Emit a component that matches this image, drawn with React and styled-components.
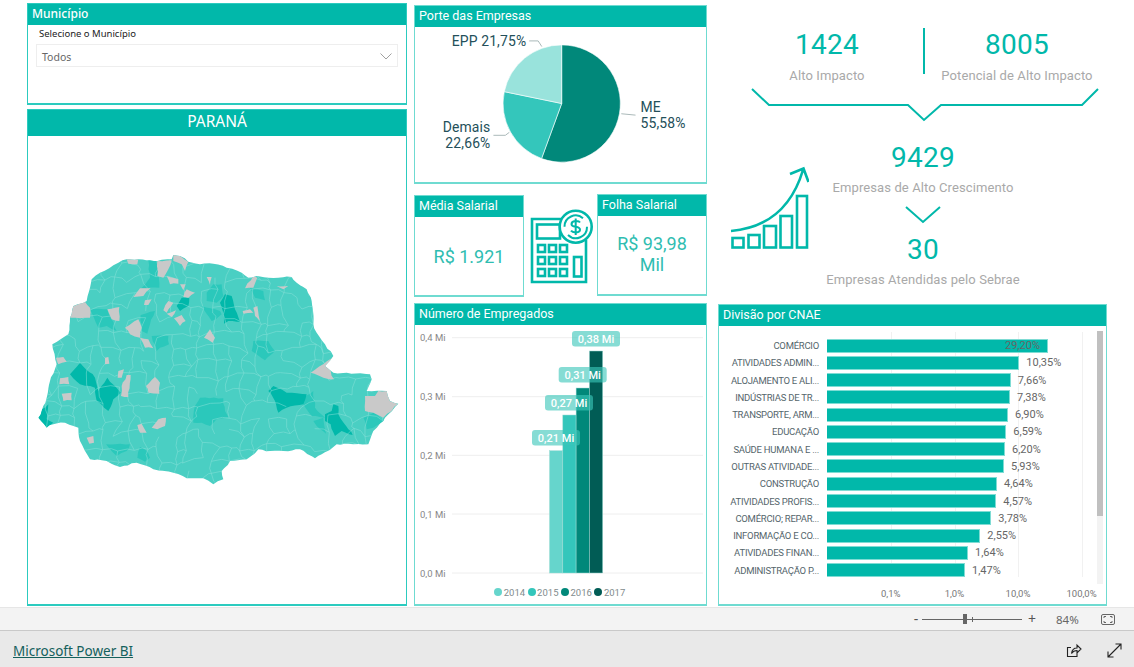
import styled, { createGlobalStyle } from 'styled-components';

const TEAL = '#01b8aa';
const DIN = '"Roboto", "Liberation Sans", sans-serif';
const SEGOE = '"Noto Sans", "Open Sans", sans-serif';

const Global = createGlobalStyle`
  html, body { margin: 0; padding: 0; background: #fff; overflow: hidden; }
  #root { height: 667px; }
`;

const Page = styled.div`
  height: 667px;
  display: flex;
  flex-direction: column;
  font-family: ${DIN};
`;

const Canvas = styled.main`
  height: 606px;
  flex: none;
  display: flex;
  padding-left: 27px;
  padding-bottom: 1px;
`;

const LeftColumn = styled.section`
  width: 380px;
  padding-top: 3px;
  display: flex;
  flex-direction: column;
  gap: 4px;
`;

const MiddleColumn = styled.section`
  width: 293px;
  margin-left: 7px;
  padding-top: 5px;
  display: flex;
  flex-direction: column;
`;

const RightColumn = styled.section`
  width: 389px;
  margin-left: 11px;
  display: flex;
  flex-direction: column;
`;

const Panel = styled.div`
  box-sizing: border-box;
  position: relative;
  display: flex;
  flex-direction: column;
  border: 1px solid ${(p) => (p.$strong ? '#2ccbbf' : '#6fdbd1')};
  border-bottom-width: 2px;
  height: ${(p) => (p.$height ? `${p.$height}px` : 'auto')};
  flex: ${(p) => (p.$height ? 'none' : '1')};
  width: ${(p) => (p.$width ? `${p.$width}px` : 'auto')};
  margin-top: ${(p) => (p.$lowered ? '1px' : '0')};
  margin-bottom: ${(p) => (p.$lowered ? '-1px' : '0')};
  background: #fff;
`;

const PanelHeader = styled.header`
  flex: none;
  height: 21px;
  line-height: 19px;
  padding-left: 4px;
  background: #01b8aa;
  color: #fff;
  font-size: 12.5px;
`;

const SlicerHeader = styled(PanelHeader)`
  font-family: ${SEGOE};
  font-size: 12px;
  font-weight: 500;
`;

const MapHeader = styled(PanelHeader)`
  height: 26px;
  line-height: 23px;
  padding: 0;
  text-align: center;
  font-family: ${SEGOE};
  font-size: 15.5px;
`;

const SlicerLabel = styled.div`
  font-family: ${SEGOE};
  font-size: 9.5px;
  line-height: 13px;
  color: #222;
  margin: 2px 0 0 11px;
`;

const Dropdown = styled.div`
  box-sizing: border-box;
  height: 23px;
  margin: 4px 8px 0;
  padding: 2px 5px 0;
  border: 1px solid #eeeeee;
  display: flex;
  align-items: center;
  justify-content: space-between;
  font-family: ${SEGOE};
  font-size: 10.5px;
  color: #666;
`;

const MapBody = styled.div`
  padding-top: 105px;
  svg { display: block; }
`;

const MetricRow = styled.div`
  display: flex;
  height: 102px;
  margin-top: 10px;
  margin-bottom: 7px;
  flex: none;
`;

const MetricValue = styled.div`
  flex: 1;
  display: flex;
  align-items: center;
  justify-content: center;
  text-align: center;
  color: #2fbdb1;
  font-size: 18px;
  line-height: 21px;
  padding-bottom: ${(p) => p.$lift}px;
`;

const CalcSlot = styled.div`
  width: 73px;
  flex: none;
  svg { display: block; }
`;

const Legend = styled.div`
  display: flex;
  justify-content: center;
  font-size: 9.5px;
  color: #7f8c8d;
  height: 14px;
  margin-top: 7px;
  padding-left: 1px;
`;

const LegendItem = styled.span`
  width: 33.4px;
  display: flex;
  align-items: center;
  gap: 1.5px;
  &::before {
    content: '';
    width: 8px;
    height: 8px;
    flex: none;
    border-radius: 50%;
    background: ${(p) => p.$color};
  }
`;

const KpiArea = styled.div`
  height: 304px;
  flex: none;
  display: flex;
  flex-direction: column;
  svg { display: block; flex: none; }
`;

const KpiTop = styled.div`
  display: grid;
  grid-template-columns: 192px 2px 184px;
  padding: 28px 0 0 13px;
  height: 57px;
`;

const Kpi = styled.div`
  text-align: center;
  color: ${TEAL};
`;

const KpiNumber = styled.div`
  font-size: 28px;
  line-height: 34px;
  font-weight: 450;
  color: ${TEAL};
  letter-spacing: 0.3px;
  margin-top: ${(p) => p.$gap || 0}px;
`;

const KpiLabel = styled.div`
  font-size: 13px;
  line-height: 17px;
  color: #a9a9a9;
  white-space: nowrap;
  letter-spacing: 0.1px;
  margin-top: ${(p) => p.$gap}px;
`;

const Divider = styled.div`
  width: 2px;
  height: 46px;
  background: ${TEAL};
`;

const KpiBottom = styled.div`
  display: flex;
  padding-left: 7px;
`;

const GrowthSlot = styled.div`
  width: 84px;
  flex: none;
  padding-top: 38px;
`;

const KpiStack = styled.div`
  width: 228px;
  display: flex;
  flex-direction: column;
  align-items: center;
  padding-top: 19px;
`;

const StackChevron = styled.svg`
  margin-top: 10.5px;
`;

const CnaeBody = styled.div`
  position: relative;
  flex: 1;
  padding: 11px 0 0 1px;
`;

const CnaeRows = styled.div`
  display: grid;
  grid-auto-rows: 17.27px;
  position: relative;
`;

const CnaeRow = styled.div`
  display: grid;
  grid-template-columns: 99px 1fr;
  column-gap: 8px;
  align-items: center;
`;

const CnaeName = styled.div`
  font-size: 9.5px;
  letter-spacing: -0.25px;
  color: #55666c;
  text-align: right;
  white-space: nowrap;
`;

const BarTrack = styled.div`
  display: flex;
  align-items: center;
  position: relative;
`;

const Bar = styled.div`
  box-sizing: border-box;
  height: 14px;
  flex: none;
  background: ${TEAL};
  border: 1px solid #7fdcd4;
  border-left: none;
`;

const BarValue = styled.span`
  font-size: 11px;
  color: #666;
  margin-left: ${(p) => (p.$inside ? '-43px' : '7px')};
  position: relative;
`;

const GridLine = styled.div`
  position: absolute;
  top: 6px;
  width: 1px;
  height: 245px;
  background: #f1f1f1;
`;

const TickRow = styled.div`
  position: absolute;
  left: 140px;
  top: 262px;
  display: flex;
  font-size: 9.5px;
  color: #777;
`;

const Tick = styled.span`
  width: 63.6px;
  text-align: center;
`;

const ScrollTrack = styled.div`
  position: absolute;
  right: 3px;
  top: 5px;
  width: 6px;
  height: 253px;
  background: #f3f3f3;
`;

const ScrollThumb = styled.div`
  width: 6px;
  height: 185px;
  background: #c0c0c0;
`;

const ZoomBar = styled.div`
  flex: none;
  box-sizing: border-box;
  height: 23px;
  background: #f3f3f3;
  border-top: 1px solid #e6e6e6;
  display: flex;
  align-items: center;
  font-family: ${SEGOE};
  color: #666;
  padding-left: 912px;
  font-size: 11.5px;
`;

const ZoomSign = styled.span`
  width: 8px;
  text-align: center;
  font-size: 14px;
  line-height: 20px;
  color: #555;
`;

const Slider = styled.div`
  position: relative;
  width: 100px;
  height: 1px;
  margin: 0 6px 0 2px;
  background: #666;
`;

const SliderThumb = styled.div`
  position: absolute;
  left: 41px;
  top: -5px;
  width: 4px;
  height: 10px;
  background: #666;
`;

const SliderTick = styled.div`
  position: absolute;
  left: 50px;
  top: -2px;
  width: 1px;
  height: 5px;
  background: #666;
`;

const ZoomPercent = styled.span`
  margin-left: 20px;
  width: 45px;
`;

const FooterBar = styled.footer`
  flex: 1;
  background: #e9e9e9;
  border-top: 1px solid #c9c9c9;
  display: flex;
  align-items: center;
  padding: 4px 12px 0 13px;
`;

const BrandLink = styled.a`
  font-family: ${SEGOE};
  font-size: 13.5px;
  color: #14605c;
  text-decoration: underline;
`;

const FooterIcons = styled.div`
  margin-left: auto;
  display: flex;
  gap: 25px;
  svg { display: block; }
`;

// contorno e municípios em coordenadas do recorte (1/3 de pixel)
const OUTLINE = '215,115 240,95 295,65 320,55 355,55 390,58 412,60 455,55 460,42 480,45 505,62 540,70 580,68 620,80 665,95 685,110 710,105 745,110 815,108 830,125 860,145 875,180 880,250 890,275 915,310 940,345 915,375 940,395 1050,400 1055,415 1040,450 1100,450 1110,480 1135,488 1095,530 1090,540 1060,570 1045,610 1000,610 950,610 905,640 885,652 840,625 790,630 750,630 715,625 680,655 630,660 605,690 610,715 580,730 550,712 500,712 460,695 400,685 350,665 300,678 260,660 210,655 180,600 175,560 135,545 100,550 80,560 55,530 65,510 80,470 90,420 110,370 97,310 145,280 150,230 160,195 200,180';

const MID_AREAS = [
  '210,205 262,205 290,270 260,255 235,260', '385,58 412,60 418,140 365,140 390,110',
  '362,222 405,210 390,250 382,278 365,270', '395,285 445,285 447,310 420,320 410,330',
  '560,155 580,130 605,130 610,165 590,185 560,180', '545,195 600,210 605,220 575,240',
  '695,330 700,300 745,300 765,330 735,358', '520,545 525,495 540,470 610,472 615,510 625,528 590,535 570,555 545,545',
  '840,480 880,450 885,500 915,530 875,525', '880,540 910,530 918,578 890,555',
  '1030,530 1060,515 1092,538 1060,560 1040,565', '258,610 330,610 320,630 290,645',
  '360,618 380,630 390,650 375,662 352,650', '690,140 730,150 735,178 705,170',
];

const DARK_AREAS = [
  '600,185 615,160 635,165 645,205 660,242 625,240 612,248 610,215', '470,195 485,170 508,172 505,195 480,210',
  '150,400 180,365 225,410 235,450 262,410 302,455 280,475 265,510 230,480 225,440 180,430',
  '745,450 760,435 800,455 860,460 850,490 800,500 775,515 765,480',
  '915,520 935,510 940,490 955,495 955,520 985,565 998,582 965,570 945,585 932,550 915,540',
  '55,530 65,505 85,490 80,535 100,545 80,560',
];

const GREY_AREAS = [
  '320,55 355,55 352,70 325,68', '412,60 455,58 445,85 430,110 412,105', '460,42 480,45 505,62 495,90 485,70 460,60',
  '440,105 475,115 475,128 450,130', '560,108 575,108 570,132', '700,105 712,110 700,140 675,142',
  '340,168 360,142 392,142 370,165', '375,178 395,175 385,192 372,192', '480,130 497,130 490,148',
  '500,145 525,155 505,170 490,168', '150,230 160,195 195,182 210,200 210,230', '262,205 298,198 298,240 275,235',
  '445,180 460,185 440,215 430,208', '440,218 468,208 455,228', '462,232 485,222 497,240 480,255',
  '315,260 355,235 365,260 360,290 330,280', '360,290 385,295 400,322 375,320', '552,290 570,265 585,290 578,305',
  '668,210 690,205 700,215 670,218', '700,200 712,195 720,240 705,225', '770,135 805,135 790,145',
  '108,350 130,348 140,362 115,370', '255,350 265,348 268,368 255,370', '295,390 312,385 305,410 293,410',
  '120,412 145,408 148,430 118,430', '125,458 155,455 155,478 130,480', '320,402 332,402 325,468 303,465 305,435',
  '378,435 405,408 420,425 418,458 385,455', '872,395 935,352 925,380 942,415 910,410',
  '1035,465 1065,465 1075,450 1100,450 1110,480 1135,488 1090,530 1060,515 1035,510',
  '395,560 415,535 438,530 435,555 412,565', '352,552 365,548 380,575 360,575', '200,590 220,585 222,605 208,608',
];

const makeRandom = (start) => {
  let seed = start;
  return () => {
    seed = (seed * 9301 + 49297) % 233280;
    return seed / 233280;
  };
};

// quebra as arestas para o contorno ficar serrilhado como no mapa
const roughen = (points, amount = 5) => {
  const rnd = makeRandom(points.length);
  const list = points.split(' ').map((p) => p.split(',').map(Number));
  const out = [];
  list.forEach(([x, y], i) => {
    const [x2, y2] = list[(i + 1) % list.length];
    const parts = Math.max(1, Math.round(Math.hypot(x2 - x, y2 - y) / 14));
    for (let k = 0; k < parts; k++) {
      const t = k / parts;
      const dx = k === 0 ? 0 : (rnd() - 0.5) * amount;
      const dy = k === 0 ? 0 : (rnd() - 0.5) * amount;
      out.push(`${(x + (x2 - x) * t + dx).toFixed(1)},${(y + (y2 - y) * t + dy).toFixed(1)}`);
    }
  });
  return out.join(' ');
};

// malha irregular para as divisas entre municípios
const borderPath = () => {
  const rnd = makeRandom(17);
  const step = 42;
  const cols = 28;
  const rows = 19;
  const pts = [];
  for (let j = 0; j < rows; j++) {
    pts[j] = [];
    for (let i = 0; i < cols; i++) {
      pts[j][i] = [40 + i * step + (rnd() - 0.5) * 30, 30 + j * step + (rnd() - 0.5) * 30];
    }
  }
  let d = '';
  for (let j = 0; j < rows; j++) {
    for (let i = 0; i < cols; i++) {
      const [x, y] = pts[j][i];
      if (i < cols - 1 && rnd() > 0.28) {
        const [x2, y2] = pts[j][i + 1];
        d += `M${x.toFixed(0)} ${y.toFixed(0)}L${((x + x2) / 2 + 4).toFixed(0)} ${((y + y2) / 2 - 5).toFixed(0)}L${x2.toFixed(0)} ${y2.toFixed(0)}`;
      }
      if (j < rows - 1 && rnd() > 0.28) {
        const [x2, y2] = pts[j + 1][i];
        d += `M${x.toFixed(0)} ${y.toFixed(0)}L${((x + x2) / 2 - 5).toFixed(0)} ${((y + y2) / 2 + 3).toFixed(0)}L${x2.toFixed(0)} ${y2.toFixed(0)}`;
      }
    }
  }
  return d;
};

const ParanaMap = () => {
  const outline = roughen(OUTLINE);
  return (
    <svg width="378" height="250" viewBox="24 0 1134 750">
      <defs>
        <clipPath id="parana">
          <polygon points={outline} />
        </clipPath>
      </defs>
      <polygon points={outline} fill="#4acfc3" />
      <g clipPath="url(#parana)">
        {MID_AREAS.map((p) => <polygon key={p} points={roughen(p, 4)} fill="#2bc8bb" />)}
        {DARK_AREAS.map((p) => <polygon key={p} points={roughen(p, 4)} fill="#01b8aa" />)}
        <path d={borderPath()} fill="none" stroke="#8be2da" strokeWidth="1.8" opacity="0.85" />
        {GREY_AREAS.map((p) => <polygon key={p} points={roughen(p, 4)} fill="#c9c9c9" />)}
      </g>
    </svg>
  );
};

const PIE = [
  { share: 55.58, color: '#01887a' },
  { share: 22.66, color: '#34c6bb' },
  { share: 21.75, color: '#99e3dc' },
];

const slicePath = (cx, cy, r, from, to) => {
  const pt = (v) => {
    const a = (v / 100) * 2 * Math.PI - Math.PI / 2;
    return `${(cx + r * Math.cos(a)).toFixed(2)} ${(cy + r * Math.sin(a)).toFixed(2)}`;
  };
  return `M${cx} ${cy}L${pt(from)}A${r} ${r} 0 ${to - from > 50 ? 1 : 0} 1 ${pt(to)}Z`;
};

const PieText = styled.text`
  font-family: ${DIN};
  font-size: 14px;
  letter-spacing: 0.15px;
  fill: #24505a;
`;

const PorteChart = () => {
  let start = 0;
  return (
    <svg width="291" height="156" viewBox="415 27 291 156">
      {PIE.map((s) => {
        const d = slicePath(561.7, 104, 59, start, start + s.share);
        start += s.share;
        return <path key={s.color} d={d} fill={s.color} stroke="#fff" strokeWidth="0.6" />;
      })}
      <g fill="none" stroke="#a9b8b8" strokeWidth="1">
        <path d="M529 41H538L541.7 46.7" />
        <path d="M493 136H505L509 133" />
        <path d="M621.7 114.3L636 115.7" />
      </g>
      <PieText x="451" y="46">EPP 21,75%</PieText>
      <PieText x="490" y="133" textAnchor="end">Demais</PieText>
      <PieText x="490" y="149" textAnchor="end">22,66%</PieText>
      <PieText x="641" y="112.5">ME</PieText>
      <PieText x="641" y="128.5">55,58%</PieText>
    </svg>
  );
};

const AxisText = styled.text`
  font-family: ${DIN};
  font-size: 9.5px;
  fill: #888;
`;

const PillText = styled.text`
  font-family: ${DIN};
  font-size: 11px;
  font-weight: 500;
  fill: #fff;
  text-anchor: middle;
`;

const YEARS = [
  { year: '2014', color: '#66d5cc', top: 450.7, x: 549.5, label: '0,21 Mi', px: 532, py: 430 },
  { year: '2015', color: '#34c6bb', top: 415, x: 562.8, label: '0,27 Mi', px: 545, py: 395 },
  { year: '2016', color: '#01887a', top: 388, x: 576.1, label: '0,31 Mi', px: 558.7, py: 367 },
  { year: '2017', color: '#015c55', top: 351, x: 589.4, label: '0,38 Mi', px: 572, py: 331 },
];

const EmpregadosChart = () => (
  <svg width="291" height="253" viewBox="415 325 291 253" style={{ display: 'block' }}>
    {[['0,4 Mi', 337.7], ['0,3 Mi', 396.7], ['0,2 Mi', 455.3], ['0,1 Mi', 514], ['0,0 Mi', 573]].map(([t, y]) => (
      <g key={t}>
        <line x1="452" x2="703" y1={y} y2={y} stroke="#eeeeee" />
        <AxisText x="420" y={y + 3.5}>{t}</AxisText>
      </g>
    ))}
    {YEARS.map((b) => (
      <rect key={b.year} x={b.x} y={b.top} width="13.3" height={573 - b.top} fill={b.color} stroke="#9fdcd6" strokeWidth="0.5" />
    ))}
    {YEARS.map((b) => (
      <g key={b.label}>
        <rect x={b.px} y={b.py} width="48" height="15.5" rx="3" fill="#3cc6ba" fillOpacity="0.62" />
        <PillText x={b.px + 24} y={b.py + 12}>{b.label}</PillText>
      </g>
    ))}
  </svg>
);

const CalculatorIcon = () => (
  <svg width="73" height="102" viewBox="524 194 73 102">
    <g fill="none" stroke={TEAL} strokeWidth="2.6">
      <path d="M566 219H532V282H586V240" />
      <rect x="537" y="224.5" width="23" height="14" />
      <circle cx="575.7" cy="226.7" r="16" fill="#fff" />
      <path d="M564.5 226.7A11.2 11.2 0 0 1 583 218.2M587 226.7A11.2 11.2 0 0 1 568 235" strokeWidth="2" />
      <path d="M580 222.5C578.5 220.2 571.5 220.5 571.5 224.2C571.5 228 580 225.5 580 229.7C580 233 573 233.3 571 230.7M575.7 218.5V235" strokeWidth="2" />
      {[245, 257, 269].map((y) => [538, 549, 560].map((x) => (
        <rect key={`${x}-${y}`} x={x} y={y} width="7" height="7" />
      )))}
      <rect x="574" y="257" width="7.5" height="19.5" />
    </g>
  </svg>
);

const GrowthIcon = () => (
  <svg width="84" height="90" viewBox="0 0 84 90">
    <g fill="none" stroke={TEAL} strokeWidth="2.6">
      <rect x="7.5" y="78" width="11" height="9.5" />
      <rect x="23.5" y="75" width="11" height="12.5" />
      <rect x="39" y="66" width="12" height="21.5" />
      <rect x="55.5" y="56" width="11.5" height="31.5" />
      <rect x="72" y="36" width="10" height="51.5" />
      <path d="M6 71C40 68 66 50 78 10M65 14L78.5 8.5L83.5 22" />
    </g>
  </svg>
);

const CNAE = [
  ['COMÉRCIO', 998, '29,20%'],
  ['ATIVIDADES ADMIN...', 912, '10,35%'],
  ['ALOJAMENTO E ALI...', 886, '7,66%'],
  ['INDÚSTRIAS DE TR...', 884, '7,38%'],
  ['TRANSPORTE, ARM...', 878, '6,90%'],
  ['EDUCAÇÃO', 873, '6,59%'],
  ['SAÚDE HUMANA E ...', 869, '6,20%'],
  ['OUTRAS ATIVIDADE...', 866, '5,93%'],
  ['CONSTRUÇÃO', 845, '4,64%'],
  ['ATIVIDADES PROFIS...', 843, '4,57%'],
  ['COMÉRCIO; REPAR...', 828, '3,78%'],
  ['INFORMAÇÃO E CO...', 795, '2,55%'],
  ['ATIVIDADES FINAN...', 758, '1,64%'],
  ['ADMINISTRAÇÃO P...', 749, '1,47%'],
];

const App = () => (
  <Page>
    <Global />
    <Canvas>
      <LeftColumn>
        <Panel $strong $height={102}>
          <SlicerHeader>Município</SlicerHeader>
          <SlicerLabel>Selecione o Município</SlicerLabel>
          <Dropdown>
            Todos
            <svg width="12" height="7" viewBox="0 0 12 7">
              <path d="M0.5 0.5L6 6L11.5 0.5" fill="none" stroke="#888" strokeWidth="0.8" />
            </svg>
          </Dropdown>
        </Panel>
        <Panel $strong>
          <MapHeader>PARANÁ</MapHeader>
          <MapBody>
            <ParanaMap />
          </MapBody>
        </Panel>
      </LeftColumn>

      <MiddleColumn>
        <Panel $height={179}>
          <PanelHeader>Porte das Empresas</PanelHeader>
          <PorteChart />
        </Panel>
        <MetricRow>
          <Panel $width={110} $lowered>
            <PanelHeader>Média Salarial</PanelHeader>
            <MetricValue $lift={0}>R$ 1.921</MetricValue>
          </Panel>
          <CalcSlot>
            <CalculatorIcon />
          </CalcSlot>
          <Panel $width={110}>
            <PanelHeader>Folha Salarial</PanelHeader>
            <MetricValue $lift={3}>R$ 93,98<br />Mil</MetricValue>
          </Panel>
        </MetricRow>
        <Panel>
          <PanelHeader>Número de Empregados</PanelHeader>
          <EmpregadosChart />
          <Legend>
            {YEARS.map((b) => <LegendItem key={b.year} $color={b.color}>{b.year}</LegendItem>)}
          </Legend>
        </Panel>
      </MiddleColumn>

      <RightColumn>
        <KpiArea>
          <KpiTop>
            <Kpi>
              <KpiNumber>1424</KpiNumber>
              <KpiLabel $gap={5}>Alto Impacto</KpiLabel>
            </Kpi>
            <Divider />
            <Kpi>
              <KpiNumber>8005</KpiNumber>
              <KpiLabel $gap={5}>Potencial de Alto Impacto</KpiLabel>
            </Kpi>
          </KpiTop>
          <svg width="389" height="37" viewBox="718 85 389 37">
            <path d="M752 89L769 105H908L924 120L941 105H1082L1098 89" fill="none" stroke={TEAL} strokeWidth="2" />
          </svg>
          <KpiBottom>
            <GrowthSlot>
              <GrowthIcon />
            </GrowthSlot>
            <KpiStack>
              <KpiNumber>9429</KpiNumber>
              <KpiLabel $gap={3.5}>Empresas de Alto Crescimento</KpiLabel>
              <StackChevron width="36" height="18" viewBox="0 0 36 18">
                <path d="M1 1L18 16L35 1" fill="none" stroke={TEAL} strokeWidth="2" />
              </StackChevron>
              <KpiNumber $gap={9}>30</KpiNumber>
              <KpiLabel $gap={3.5}>Empresas Atendidas pelo Sebrae</KpiLabel>
            </KpiStack>
          </KpiBottom>
        </KpiArea>
        <Panel>
          <PanelHeader>Divisão por CNAE</PanelHeader>
          <CnaeBody>
            {[172, 235.6, 299, 362.6].map((x) => <GridLine key={x} style={{ left: x }} />)}
            <CnaeRows>
              {CNAE.map(([name, end, value], i) => (
                <CnaeRow key={name}>
                  <CnaeName>{name}</CnaeName>
                  <BarTrack>
                    <Bar style={{ width: (end - 335) / 3 }} />
                    <BarValue $inside={i === 0}>{value}</BarValue>
                  </BarTrack>
                </CnaeRow>
              ))}
            </CnaeRows>
            <TickRow>
              <Tick>0,1%</Tick>
              <Tick>1,0%</Tick>
              <Tick>10,0%</Tick>
              <Tick>100,0%</Tick>
            </TickRow>
            <ScrollTrack>
              <ScrollThumb />
            </ScrollTrack>
          </CnaeBody>
        </Panel>
      </RightColumn>
    </Canvas>

    <ZoomBar>
      <ZoomSign>-</ZoomSign>
      <Slider>
        <SliderThumb />
        <SliderTick />
      </Slider>
      <ZoomSign>+</ZoomSign>
      <ZoomPercent>84%</ZoomPercent>
      <svg width="14" height="11" viewBox="0 0 14 11">
        <rect x="0.5" y="0.5" width="13" height="10" rx="1.5" fill="none" stroke="#666" />
        <path d="M3 4V2.5H5M9 2.5H11V4M3 7V8.5H5M9 8.5H11V7" fill="none" stroke="#666" />
      </svg>
    </ZoomBar>

    <FooterBar>
      <BrandLink href="#">Microsoft Power BI</BrandLink>
      <FooterIcons>
        <svg width="16" height="16" viewBox="0 0 16 16">
          <path d="M11 9.5V13.5H1.5V4.5H5M5.5 10.5C6 7 8.5 5 11 5V2L15 6L11 10V7.5C9 7.5 6.8 8.5 5.5 10.5Z" fill="none" stroke="#222" strokeWidth="1.1" />
        </svg>
        <svg width="15" height="15" viewBox="0 0 15 15">
          <path d="M1 14L14 1M8.5 1H14V6.5M1 8.5V14H6.5" fill="none" stroke="#222" strokeWidth="1.1" />
        </svg>
      </FooterIcons>
    </FooterBar>
  </Page>
);

export default App;
